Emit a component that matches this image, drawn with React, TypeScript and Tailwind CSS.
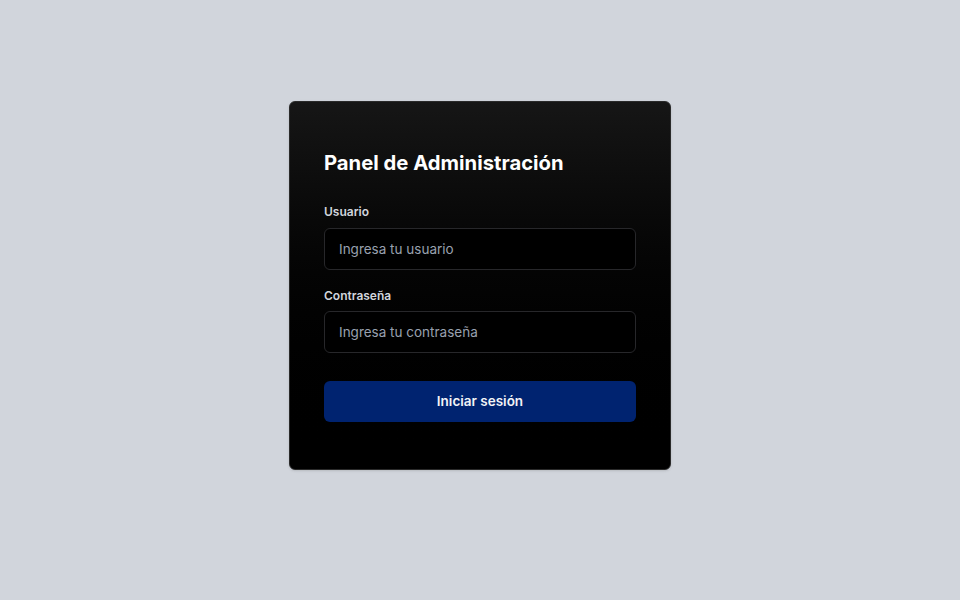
export default function App() {
  return (
    <div
      className="flex min-h-screen justify-center bg-gray-300 pt-[101px]"
      style={{ fontFamily: "Inter, 'Noto Sans', sans-serif" }}
    >
      <div className="h-fit w-[382px] rounded-md border border-[#2a2a2a] bg-gradient-to-b from-[#161616] to-[#000000] px-[34px] pt-[47px] pb-[47px] shadow-sm">
        <h1 className="text-[20.25px] font-bold leading-7 text-white">Panel de Administración</h1>

        <form className="mt-[27px] flex flex-col">
          <label className="text-xs font-semibold leading-4 text-gray-300">Usuario</label>
          <input
            type="text"
            placeholder="Ingresa tu usuario"
            className="mt-2 h-[42px] w-full rounded-md border border-[#27272a] bg-black px-[14px] text-[13.5px] text-white placeholder:text-gray-400 outline-none"
          />

          <label className="mt-[18px] text-xs font-semibold leading-4 text-gray-300">Contraseña</label>
          <input
            type="password"
            placeholder="Ingresa tu contraseña"
            className="mt-[7px] h-[42px] w-full rounded-md border border-[#27272a] bg-black px-[14px] text-[13.5px] text-white placeholder:text-gray-400 outline-none"
          />

          <button
            type="button"
            className="mt-[28px] h-[41px] w-full rounded-md bg-[#002370] text-[13.5px] font-semibold text-gray-100"
          >
            Iniciar sesión
          </button>
        </form>
      </div>
    </div>
  );
}
